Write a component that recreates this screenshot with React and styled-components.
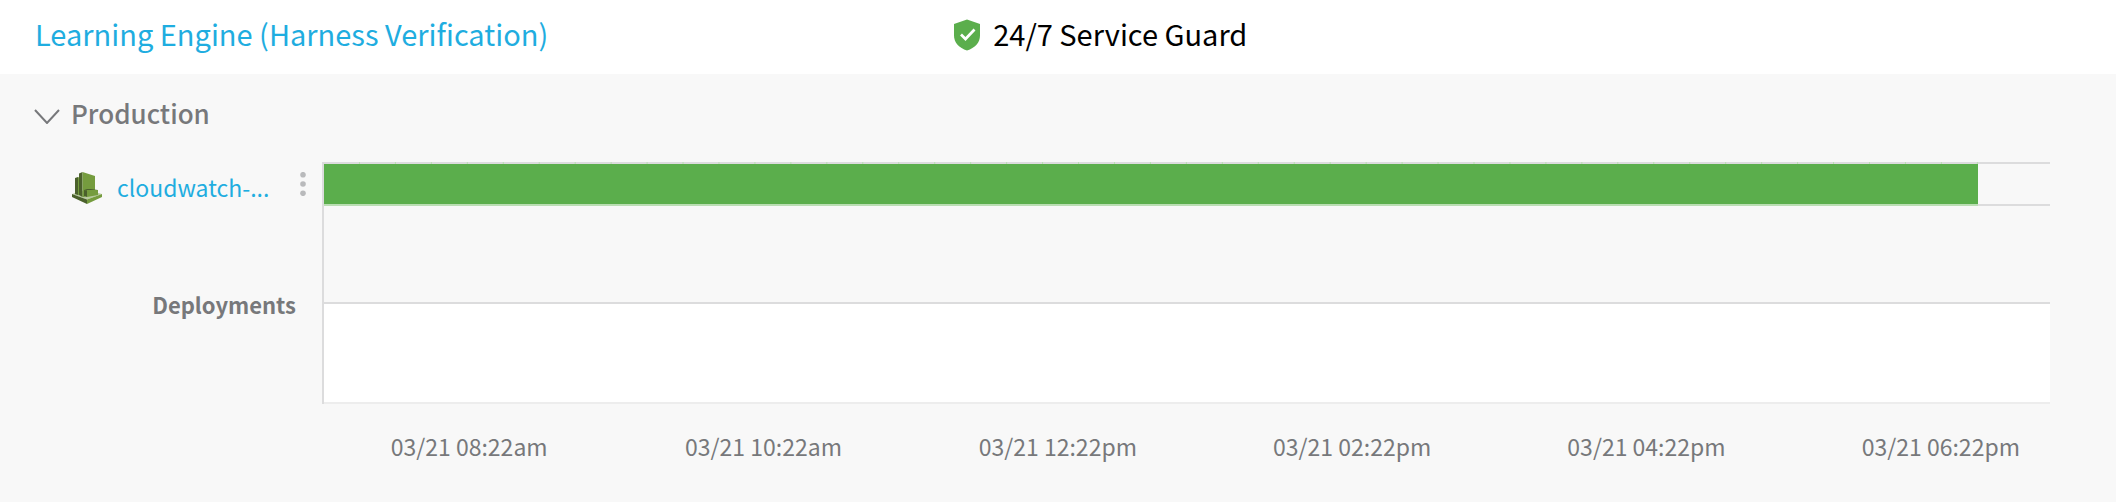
import React from "react";
import styled, { createGlobalStyle } from "styled-components";

const GlobalStyle = createGlobalStyle`
  *, *::before, *::after { box-sizing: border-box; }
  html, body, #root { min-height: 100vh; }
  body {
    margin: 0;
    background: #f8f8f8;
    color: #77787b;
    font-family: "Noto Sans CJK SC", "Noto Sans", sans-serif;
  }
`;

const Header = styled.header`
  display: grid;
  grid-template-columns: 45% 1fr;
  align-items: start;
  height: 74px;
  padding-top: 13px;
  background: #fff;
  font-size: 29px;
  line-height: 40px;
`;

const ServiceName = styled.div`
  padding-left: 35px;
`;

const ServiceLink = styled.a`
  color: #1fade0;
  text-decoration: none;
`;

const Guard = styled.h1`
  display: flex;
  align-items: center;
  gap: 13px;
  margin: 0;
  padding-left: 2px;
  color: #000;
  font-size: 29px;
  font-weight: 400;

  svg {
    margin-top: 4px;
  }
`;

const SectionToggle = styled.button`
  display: flex;
  align-items: center;
  gap: 11px;
  margin: 19px 0 29px 34px;
  padding: 0;
  border: 0;
  background: none;
  color: inherit;
  font: 500 26px/40px "Noto Sans CJK SC", "Noto Sans", sans-serif;
`;

const Board = styled.section`
  display: grid;
  grid-template-columns: 322px 1fr;
`;

const Labels = styled.div`
  display: flex;
  flex-direction: column;
`;

const MonitorLabel = styled.div`
  display: flex;
  align-items: flex-start;
  height: 44px;
  padding: 10px 12px 0 72px;
`;

const MonitorLink = styled(ServiceLink)`
  margin-left: 15px;
  font-size: 23px;
  line-height: 30px;
`;

const MenuButton = styled.button`
  display: flex;
  margin-left: auto;
  padding: 0 4px;
  border: 0;
  background: none;
`;

const DeploymentsLabel = styled.h2`
  margin: 82px 26px 0 0;
  font-size: 22px;
  font-weight: 700;
  line-height: 32px;
  text-align: right;
`;

const Plot = styled.div`
  margin-right: 66px;
  border-left: 2px solid #dcdcdd;
`;

const Track = styled.div`
  height: 44px;
  border: solid #dcdcdd;
  border-width: 2px 0;
`;

const HealthBar = styled.div`
  position: relative;
  width: calc(100% * 23 / 24);
  height: 42px;
  border-bottom: 2px solid #badeb3;
  background: #5bae4c;

  &::before {
    content: "";
    position: absolute;
    inset: -2px 0 auto;
    height: 2px;
    background: linear-gradient(to right, transparent calc(100% - 1px), #badeb3 0) 0 0 / calc(100% / 46) 100%;
  }
`;

const DeploymentsLane = styled.div`
  height: 102px;
  margin-top: 96px;
  border-top: 2px solid #dcdcdd;
  border-bottom: 2px solid #ededed;
  background: #fff;
`;

const Axis = styled.div`
  display: grid;
  grid-template-columns: repeat(6, 1fr);
  grid-column: 2;
  margin: 26px 28px 0 0;
  font-size: 23px;
  line-height: 32px;
  text-align: center;
`;

const times = ["08:22am", "10:22am", "12:22pm", "02:22pm", "04:22pm", "06:22pm"];

const ShieldIcon = () => (
  <svg width="26" height="32" viewBox="0 0 26 32" aria-hidden="true">
    <path d="M13 .5 26 5v11.500c0 7-5 12.500-13 15C5 29 0 23.500 0 16.500V5Z" fill="#5bae4c" />
    <path d="m7 15.500 4.500 4.500 9-9.500" fill="none" stroke="#fff" strokeWidth="2.700" />
  </svg>
);

const ChevronIcon = () => (
  <svg width="26" height="22" viewBox="0 0 26 22" aria-hidden="true">
    <path d="m1 8 12 13L25 8" fill="none" stroke="#77787b" strokeWidth="2" />
  </svg>
);

const CloudWatchIcon = () => (
  <svg width="30" height="32" viewBox="0 0 30 32" aria-hidden="true">
    <path d="m0 22 15-4 15 4-15 5.500Z" fill="#b7ca9d" />
    <path d="m0 22 15 5.500V32L0 25Z" fill="#4b612c" />
    <path d="m30 22-15 5.500V32l15-7Z" fill="#759c3e" />
    <path d="m3 6 3-1v18l-3-1Z" fill="#4b612c" />
    <path d="m6 5 2 1v17H6Z" fill="#759c3e" />
    <path d="m7 1.500 3.500-1.500v25L7 23Z" fill="#4b612c" />
    <path d="m10.500 0 12.500 4v15l-11 6h-1.500Z" fill="#759c3e" />
    <path d="m12 18 3-1h11l-11 1.500Z" fill="#4b612c" />
    <path d="m12 18 3 .500v6.500l-3-1Z" fill="#4b612c" />
    <path d="M15 18h11v5l-11 2Z" fill="#759c3e" />
  </svg>
);

const MoreIcon = () => (
  <svg width="6" height="24" viewBox="0 0 6 24" fill="#b9babc" aria-hidden="true">
    <circle cx="3" cy="2.700" r="2.800" />
    <circle cx="3" cy="12" r="2.800" />
    <circle cx="3" cy="21.300" r="2.800" />
  </svg>
);

export default function App() {
  return (
    <>
      <GlobalStyle />
      <Header>
        <ServiceName>
          <ServiceLink href="#service">Learning Engine (Harness Verification)</ServiceLink>
        </ServiceName>
        <Guard>
          <ShieldIcon />
          24/7 Service Guard
        </Guard>
      </Header>
      <main>
        <SectionToggle type="button" aria-expanded="true">
          <ChevronIcon />
          Production
        </SectionToggle>
        <Board>
          <Labels>
            <MonitorLabel>
              <CloudWatchIcon />
              <MonitorLink href="#cloudwatch">cloudwatch-...</MonitorLink>
              <MenuButton type="button" aria-label="More options">
                <MoreIcon />
              </MenuButton>
            </MonitorLabel>
            <DeploymentsLabel>Deployments</DeploymentsLabel>
          </Labels>
          <Plot>
            <Track>
              <HealthBar />
            </Track>
            <DeploymentsLane />
          </Plot>
          <Axis>
            {times.map((time) => (
              <time key={time}>03/21 {time}</time>
            ))}
          </Axis>
        </Board>
      </main>
    </>
  );
}
